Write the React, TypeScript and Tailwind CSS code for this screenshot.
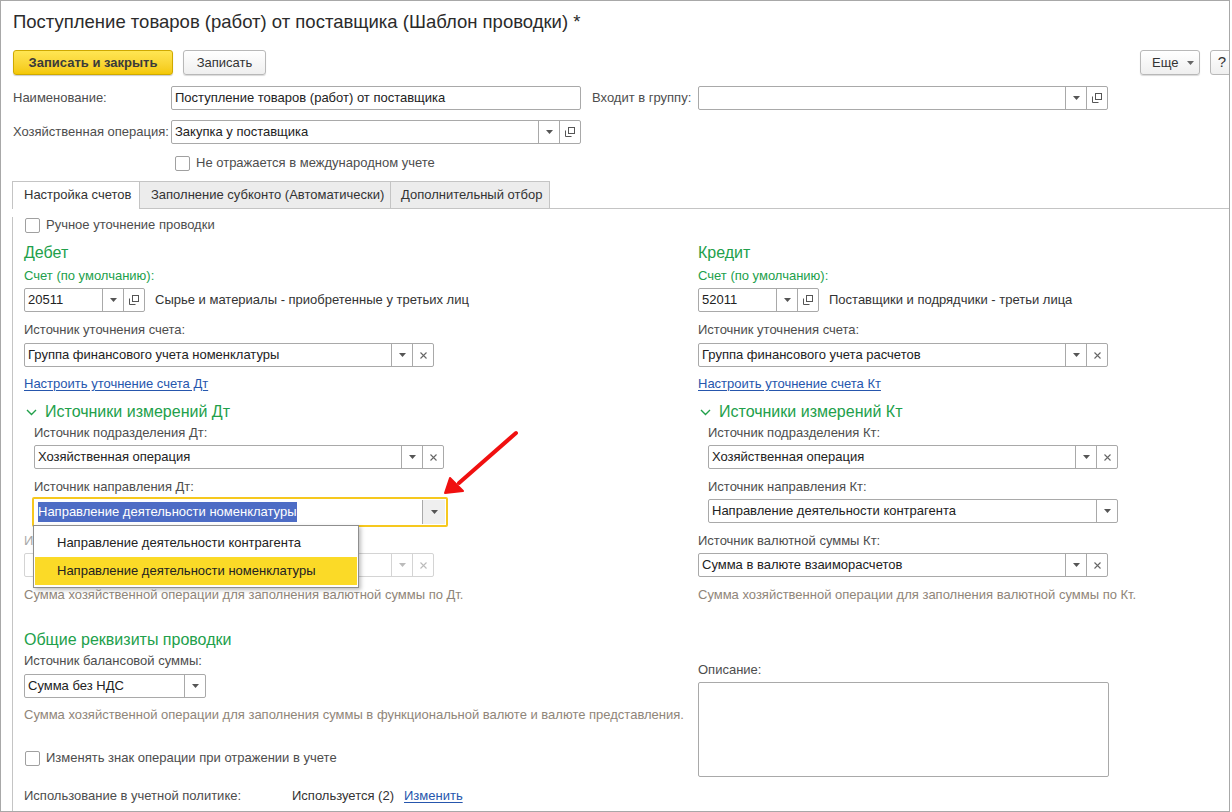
import React from "react"

type Btn = "drop" | "open" | "clear"

function DropArrow({ color = "#555" }: { color?: string }) {
  return (
    <svg width="7" height="4" viewBox="0 0 7 4">
      <path d="M0 0h7L3.5 4z" fill={color} />
    </svg>
  )
}

function OpenIcon({ color = "#555" }: { color?: string }) {
  return (
    <svg width="10" height="10" viewBox="0 0 10 10" fill="none" stroke={color} strokeWidth="1">
      <rect x="3.5" y="0.5" width="6" height="6" />
      <path d="M0.5 3.5v6h6" />
    </svg>
  )
}

function ClearIcon({ color = "#666" }: { color?: string }) {
  return (
    <svg width="7" height="7" viewBox="0 0 7 7" stroke={color} strokeWidth="1.1">
      <path d="M0.5 0.5l6 6M6.5 0.5l-6 6" />
    </svg>
  )
}

function Field({ w, value, btns, dim }: { w: string; value: string; btns: Btn[]; dim?: boolean }) {
  const border = dim ? "border-[#d4d4d4]" : "border-[#a9a9a9]"
  const ic = dim ? "#bbb" : "#555"
  return (
    <div className={`flex h-[24px] shrink-0 rounded-[2px] border bg-white ${border} ${w}`}>
      <div className="flex-1 overflow-hidden whitespace-nowrap pl-[3px] leading-[22px] text-[#222]">{value}</div>
      {btns.map((b, i) => (
        <div key={i} className={`flex w-[21px] items-center justify-center border-l ${border}`}>
          {b === "drop" && <DropArrow color={ic} />}
          {b === "open" && <OpenIcon color={ic} />}
          {b === "clear" && <ClearIcon color={dim ? "#bbb" : "#666"} />}
        </div>
      ))}
    </div>
  )
}

function Label({ children, className = "" }: { children: React.ReactNode; className?: string }) {
  return <div className={`h-[16px] leading-[16px] whitespace-nowrap text-[#4d4d4d] ${className}`}>{children}</div>
}

function Heading({ children, className = "" }: { children: React.ReactNode; className?: string }) {
  return <div className={`h-[20px] text-[16px] leading-[20px] whitespace-nowrap text-[#22a04b] ${className}`}>{children}</div>
}

function Hint({ children, className = "" }: { children: React.ReactNode; className?: string }) {
  return <div className={`h-[16px] leading-[16px] whitespace-nowrap text-[#8f8579] ${className}`}>{children}</div>
}

function Check({ label, className = "" }: { label: string; className?: string }) {
  return (
    <div className={`flex h-[16px] items-center ${className}`}>
      <div className="h-[15px] w-[15px] rounded-[2px] border border-[#a0a0a0] bg-white" />
      <span className="ml-[6px] leading-[16px] text-[#4d4d4d]">{label}</span>
    </div>
  )
}

function Link({ children, className = "" }: { children: React.ReactNode; className?: string }) {
  return <span className={`text-[#2656ad] underline underline-offset-2 ${className}`}>{children}</span>
}

function SubHeading({ children }: { children: React.ReactNode }) {
  return (
    <div className="flex h-[20px] items-center">
      <svg className="ml-[2px]" width="11" height="7" viewBox="0 0 11 7" fill="none" stroke="#22a04b" strokeWidth="1.4">
        <path d="M1 1l4.5 4.5L10 1" />
      </svg>
      <Heading className="ml-[8px]">{children}</Heading>
    </div>
  )
}

export default function App() {
  return (
    <div className="h-[812px] w-[1232px] overflow-hidden bg-white text-[13px] text-[#333] font-['Liberation_Sans',Arial,sans-serif]">
      <div className="relative h-[812px] w-[1230px] overflow-hidden border border-[#a8a8a8]">
        <div className="pl-[12px] pt-[9px] text-[18.5px] leading-[24px] text-[#2b2b2b] whitespace-nowrap">
          Поступление товаров (работ) от поставщика (Шаблон проводки) *
        </div>

        <div className="mt-[16px] flex h-[25px] pl-[12px]">
          <div className="flex h-[25px] w-[160px] shrink-0 items-center justify-center rounded-[3px] border border-[#cfa900] bg-linear-to-b from-[#ffe652] to-[#f4c800] font-bold text-[#3a3a3a] shadow-[0_1px_1px_rgba(0,0,0,0.2)]">
            Записать и закрыть
          </div>
          <div className="ml-[10px] flex h-[25px] w-[83px] shrink-0 items-center justify-center rounded-[3px] border border-[#b8b8b8] bg-linear-to-b from-white to-[#efefef] text-[#333] shadow-[0_1px_1px_rgba(0,0,0,0.15)]">
            Записать
          </div>
          <div className="ml-[874px] flex h-[25px] w-[60px] shrink-0 items-center rounded-[3px] border border-[#b8b8b8] bg-linear-to-b from-white to-[#efefef] pl-[11px] text-[#333] shadow-[0_1px_1px_rgba(0,0,0,0.15)]">
            Еще
            <span className="ml-[9px] flex"><DropArrow color="#666" /></span>
          </div>
          <div className="ml-[10px] flex h-[25px] w-[24px] shrink-0 items-center justify-center rounded-[3px] border border-[#b8b8b8] bg-linear-to-b from-white to-[#efefef] text-[15px] text-[#333]">
            ?
          </div>
        </div>

        <div className="mt-[11px] flex h-[24px] items-center pl-[12px]">
          <Label className="w-[158px] shrink-0">Наименование:</Label>
          <Field w="w-[410px]" value="Поступление товаров (работ) от поставщика" btns={[]} />
          <Label className="ml-[11px] w-[106px] shrink-0">Входит в группу:</Label>
          <Field w="w-[410px]" value="" btns={["drop", "open"]} />
        </div>

        <div className="mt-[10px] flex h-[24px] items-center pl-[12px]">
          <Label className="w-[158px] shrink-0">Хозяйственная операция:</Label>
          <Field w="w-[410px]" value="Закупка у поставщика" btns={["drop", "open"]} />
        </div>

        <Check label="Не отражается в международном учете" className="ml-[174px] mt-[11px]" />

        <div className="ml-[11px] mt-[10px] flex h-[28px]">
          <div className="h-[28px] w-[128px] shrink-0 border border-b-0 border-[#c4c4c4] bg-white pl-[11px] leading-[26px] text-[#333]">
            Настройка счетов
          </div>
          <div className="h-[28px] w-[251px] shrink-0 border border-l-0 border-[#c4c4c4] bg-[#ececec] pl-[11px] leading-[26px] text-[#333]">
            Заполнение субконто (Автоматически)
          </div>
          <div className="h-[28px] w-[159px] shrink-0 border border-l-0 border-[#c4c4c4] bg-[#ececec] pl-[10px] leading-[26px] text-[#333]">
            Дополнительный отбор
          </div>
          <div className="flex-1 border-b border-[#c4c4c4]" />
        </div>

        <div className="ml-[11px] h-[620px] border-l border-[#c4c4c4] pl-[11px]">
          <Check label="Ручное уточнение проводки" className="ml-[1px] mt-[8px]" />

          <div className="flex">
            {/* Дебет */}
            <div className="w-[674px] shrink-0">
              <Heading className="mt-[10px]">Дебет</Heading>
              <Label className="mt-[5px] !text-[#22a04b]">Счет (по умолчанию):</Label>
              <div className="mt-[4px] flex h-[24px] items-center">
                <Field w="w-[121px]" value="20511" btns={["drop", "open"]} />
                <span className="ml-[10px] text-[#333]">Сырье и материалы - приобретенные у третьих лиц</span>
              </div>
              <Label className="mt-[10px]">Источник уточнения счета:</Label>
              <div className="mt-[5px]">
                <Field w="w-[410px]" value="Группа финансового учета номенклатуры" btns={["drop", "clear"]} />
              </div>
              <div className="mt-[9px] h-[16px] leading-[16px]">
                <Link>Настроить уточнение счета Дт</Link>
              </div>
              <div className="mt-[10px]">
                <SubHeading>Источники измерений Дт</SubHeading>
              </div>
              <div className="pl-[10px]">
                <Label className="mt-[3px]">Источник подразделения Дт:</Label>
                <div className="mt-[4px]">
                  <Field w="w-[410px]" value="Хозяйственная операция" btns={["drop", "clear"]} />
                </div>
                <Label className="mt-[10px]">Источник направления Дт:</Label>
                <div className="relative ml-[-2px] mt-[2px] flex h-[30px] w-[416px] rounded-[2px] border-2 border-[#f6c81e] bg-white">
                  <div className="flex flex-1 items-center pl-[4px]">
                    <span className="bg-[#4d6cc5] leading-[20px] text-white">Направление деятельности номенклатуры</span>
                  </div>
                  <div className="my-[1px] mr-[1px] flex w-[23px] items-center justify-center border-l border-[#a9a9a9] bg-[#efefef]">
                    <DropArrow />
                  </div>
                  <div className="absolute left-[-1px] top-[26px] z-10 h-[63px] w-[326px] border border-[#8e8e8e] bg-white pt-[2px] shadow-[2px_2px_4px_rgba(0,0,0,0.25)]">
                    <div className="h-[29px] pl-[23px] leading-[29px] text-[#222]">Направление деятельности контрагента</div>
                    <div className="mx-[1px] h-[28px] bg-[#fbda27] pl-[22px] leading-[28px] text-[#222]">
                      Направление деятельности номенклатуры
                    </div>
                  </div>
                </div>
              </div>
              <Label className="mt-[6px] !text-[#a8a8a8]">Источник валютной суммы Дт:</Label>
              <div className="mt-[4px]">
                <Field w="w-[410px]" value="" btns={["drop", "clear"]} dim />
              </div>
              <Hint className="mt-[10px]">Сумма хозяйственной операции для заполнения валютной суммы по Дт.</Hint>
            </div>

            {/* Кредит */}
            <div className="flex-1">
              <Heading className="mt-[10px]">Кредит</Heading>
              <Label className="mt-[5px] !text-[#22a04b]">Счет (по умолчанию):</Label>
              <div className="mt-[4px] flex h-[24px] items-center">
                <Field w="w-[121px]" value="52011" btns={["drop", "open"]} />
                <span className="ml-[10px] text-[#333]">Поставщики и подрядчики - третьи лица</span>
              </div>
              <Label className="mt-[10px]">Источник уточнения счета:</Label>
              <div className="mt-[5px]">
                <Field w="w-[410px]" value="Группа финансового учета расчетов" btns={["drop", "clear"]} />
              </div>
              <div className="mt-[9px] h-[16px] leading-[16px]">
                <Link>Настроить уточнение счета Кт</Link>
              </div>
              <div className="mt-[10px]">
                <SubHeading>Источники измерений Кт</SubHeading>
              </div>
              <div className="pl-[10px]">
                <Label className="mt-[3px]">Источник подразделения Кт:</Label>
                <div className="mt-[4px]">
                  <Field w="w-[410px]" value="Хозяйственная операция" btns={["drop", "clear"]} />
                </div>
                <Label className="mt-[10px]">Источник направления Кт:</Label>
                <div className="mt-[4px]">
                  <Field w="w-[410px]" value="Направление деятельности контрагента" btns={["drop"]} />
                </div>
              </div>
              <Label className="mt-[10px]">Источник валютной суммы Кт:</Label>
              <div className="mt-[4px]">
                <Field w="w-[410px]" value="Сумма в валюте взаиморасчетов" btns={["drop", "clear"]} />
              </div>
              <Hint className="mt-[10px]">Сумма хозяйственной операции для заполнения валютной суммы по Кт.</Hint>
            </div>
          </div>

          <div className="flex">
            <div className="w-[674px] shrink-0">
              <Heading className="mt-[27px]">Общие реквизиты проводки</Heading>
              <Label className="mt-[3px]">Источник балансовой суммы:</Label>
              <div className="mt-[5px]">
                <Field w="w-[182px]" value="Сумма без НДС" btns={["drop"]} />
              </div>
              <Hint className="mt-[9px]">
                Сумма хозяйственной операции для заполнения суммы в функциональной валюте и валюте представления.
              </Hint>
              <Check label="Изменять знак операции при отражении в учете" className="ml-[1px] mt-[27px]" />
              <div className="mt-[22px] flex h-[16px] items-center leading-[16px]">
                <Label className="w-[268px] shrink-0">Использование в учетной политике:</Label>
                <span className="text-[#333]">Используется (2)</span>
                <Link className="ml-[10px]">Изменить</Link>
              </div>
            </div>
            <div className="flex-1">
              <Label className="mt-[59px]">Описание:</Label>
              <div className="mt-[4px] h-[95px] w-[411px] rounded-[2px] border border-[#a9a9a9] bg-white" />
            </div>
          </div>
        </div>

        <svg className="absolute left-[438px] top-[425px] z-20" width="84" height="76" viewBox="0 0 84 76">
          <path d="M77 7L20 57" stroke="#f01010" strokeWidth="4" strokeLinecap="round" />
          <path d="M6 67L11 52L24 65z" fill="#f01010" stroke="#f01010" strokeWidth="2" strokeLinejoin="round" />
        </svg>
      </div>
    </div>
  )
}
